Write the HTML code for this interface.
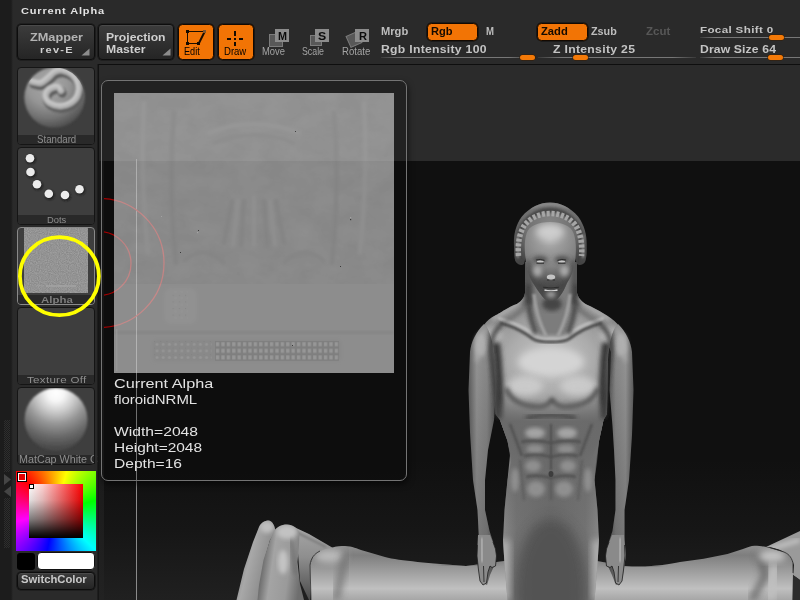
<!DOCTYPE html>
<html>
<head>
<meta charset="utf-8">
<title>Current Alpha</title>
<style>
*{box-sizing:border-box;margin:0;padding:0}
html,body{width:800px;height:600px;overflow:hidden;background:#2a2a2a}
body{position:relative;font-family:"Liberation Sans",sans-serif;font-size:10px;color:#c8c8c8}
.a{position:absolute}
.t{position:absolute;white-space:pre;line-height:1;transform-origin:0 0;font-family:"Liberation Sans",sans-serif}
.btn{position:absolute;border:1px solid #0d0d0d;border-radius:4px;background:linear-gradient(#3c3c3c,#252525);box-shadow:inset 0 1px 0 #4a4a4a,0 0 0 .6px #141414}
.obtn{position:absolute;border:1px solid #140900;border-radius:4.5px;background:#f27405;box-shadow:0 0 0 .6px #0c0c0c}
.sl{position:absolute;height:1px;background:linear-gradient(90deg,#3a3a3a,#777 15%,#777 85%,#3a3a3a)}
.kn{position:absolute;width:15px;height:5px;border-radius:2.5px;background:#f47a08;box-shadow:0 0 0 .5px #3a1c00}
.tile{position:absolute;left:17px;width:78px;height:78px;border:1px solid #151515;border-radius:4px;background:#3e3e3e;overflow:hidden}
.tile .cap{position:absolute;left:0;right:0;bottom:0;height:9px;background:#292929}
svg{position:absolute;overflow:hidden}
</style>
</head>
<body>
<!-- left strip -->
<div class="a" style="left:0;top:0;width:13px;height:600px;background:linear-gradient(90deg,#1c1c1c 0,#1c1c1c 11px,#2a2a2a 13px)"></div>
<div class="a" style="left:4px;top:420px;width:6px;height:52px;background:repeating-conic-gradient(#2e2e2e 0 25%,#1c1c1c 0 50%) 0 0/2px 2px"></div>
<div class="a" style="left:4px;top:498px;width:6px;height:50px;background:repeating-conic-gradient(#2e2e2e 0 25%,#1c1c1c 0 50%) 0 0/2px 2px"></div>
<svg style="left:3px;top:473px" width="9" height="25" viewBox="0 0 9 25"><path d="M1 1 L8 6.5 L1 12Z" fill="#454545"/><path d="M8 13 L1 18.5 L8 24Z" fill="#454545"/></svg>

<!-- top buttons -->
<div class="btn" style="left:17px;top:24px;width:78px;height:36px"></div>
<div class="btn" style="left:98px;top:24px;width:76px;height:36px"></div>
<svg style="left:81px;top:48px" width="9" height="8"><path d="M8.5 .5V7.5H.5Z" fill="#8c8c8c"/></svg>
<svg style="left:162px;top:48px" width="9" height="8"><path d="M8.5 .5V7.5H.5Z" fill="#8c8c8c"/></svg>
<div class="obtn" style="left:178px;top:24px;width:36px;height:36px"></div>
<div class="obtn" style="left:218px;top:24px;width:36px;height:36px"></div>
<div class="obtn" style="left:427px;top:23px;width:51px;height:18px"></div>
<div class="obtn" style="left:537px;top:23px;width:51px;height:18px"></div>

<!-- sliders -->
<div class="sl" style="left:381px;top:57px;width:150px"></div>
<div class="sl" style="left:538px;top:57px;width:158px"></div>
<div class="sl" style="left:700px;top:37px;width:100px;background:linear-gradient(90deg,#3a3a3a,#777 15%,#777)"></div>
<div class="sl" style="left:700px;top:57px;width:100px;background:linear-gradient(90deg,#3a3a3a,#777 15%,#777)"></div>
<div class="kn" style="left:520px;top:55px"></div>
<div class="kn" style="left:573px;top:55px"></div>
<div class="kn" style="left:769px;top:35px"></div>
<div class="kn" style="left:768px;top:55px"></div>

<!-- divider + canvas -->
<div class="a" style="left:97px;top:64px;width:2px;height:536px;background:linear-gradient(90deg,#222,#121212)"></div>
<div class="a" style="left:98px;top:64px;width:702px;height:97px;background:#2b2b2b;border-top:1px solid #0e0e0e;border-left:1px solid #121212"></div>
<div class="a" style="left:99px;top:161px;width:5px;height:439px;background:linear-gradient(180deg,#1b1b1b 0,#1b1b1b 68%,#222 100%)"></div>
<div class="a" id="cv" style="left:104px;top:161px;width:696px;height:439px;background:linear-gradient(180deg,#101010 0,#101010 68%,#161616 84%,#202020 100%)"></div>
<div class="a" style="left:136px;top:159px;width:1px;height:441px;background:#8a8a8a"></div>
<!-- edit icon -->
<svg style="left:178px;top:24px" width="36" height="36" viewBox="178 24 36 36" shape-rendering="crispEdges">
<path d="M187.5 31.5H204M187.5 31.5V43.5M187.5 43.5H198.5" stroke="#1a0d00" stroke-width="1" fill="none"/>
<path d="M199 43 L204.5 32" stroke="#1a0d00" stroke-width="2" fill="none" shape-rendering="auto"/>
<rect x="186" y="30" width="3" height="3" fill="#140a00"/><rect x="186" y="42" width="3" height="3" fill="#140a00"/><rect x="197" y="42" width="3" height="3" fill="#140a00"/><rect x="203" y="30" width="3" height="3" fill="#7d5430"/>
</svg>
<!-- draw icon -->
<svg style="left:218px;top:24px" width="36" height="36" viewBox="218 24 36 36" shape-rendering="crispEdges">
<g fill="#140a00"><rect x="234" y="31" width="2" height="5"/><rect x="234" y="38" width="2" height="2"/><rect x="234" y="42" width="2" height="4"/><rect x="227" y="38" width="4" height="2"/><rect x="239" y="38" width="4" height="2"/></g>
</svg>
<!-- move / scale / rotate -->
<svg style="left:260px;top:24px" width="115" height="26" viewBox="260 24 115 26">
<rect x="269.5" y="34.5" width="13" height="12" fill="#585858" stroke="#7c7c7c"/>
<rect x="275" y="29" width="14" height="13" fill="#8c8c8c"/>
<rect x="310.5" y="35.5" width="11" height="10" fill="#585858" stroke="#7c7c7c"/>
<rect x="315" y="29" width="14" height="13" fill="#8c8c8c"/>
<rect x="348" y="33.5" width="12" height="12" fill="#585858" stroke="#7c7c7c" transform="rotate(-24 354 39.5)"/>
<rect x="355" y="29" width="14" height="13" fill="#8c8c8c"/>
</svg>
<!-- tiles -->
<div class="tile" style="top:67px"><div class="cap"></div></div>
<div class="tile" style="top:147px"><div class="cap"></div></div>
<div class="tile" style="top:227px;border-color:#8a8a8a"><div class="cap"></div></div>
<div class="tile" style="top:307px"><div class="cap"></div></div>
<div class="tile" style="top:387px"><div class="cap"></div></div>
<svg style="left:18px;top:68px" width="76" height="67" viewBox="18 68 76 67">
<defs>
<radialGradient id="sg" cx="48" cy="84" r="46" gradientUnits="userSpaceOnUse"><stop offset="0" stop-color="#a8a8a8"/><stop offset=".45" stop-color="#969696"/><stop offset=".75" stop-color="#727272"/><stop offset="1" stop-color="#4a4a4a"/></radialGradient>
<filter id="b1" x="-20%" y="-20%" width="140%" height="140%"><feGaussianBlur stdDeviation="1.1"/></filter>
<filter id="b05"><feGaussianBlur stdDeviation=".5"/></filter>
<clipPath id="sc"><circle cx="54.6" cy="97.5" r="30"/></clipPath>
</defs>
<circle cx="54.6" cy="97.5" r="30.3" fill="url(#sg)" filter="url(#b1)"/>
<g clip-path="url(#sc)" filter="url(#b1)" fill="none" stroke-linecap="round">
<path d="M32.2 81.5 C33.6 81.7 38.0 83.5 40.6 82.9 C43.2 82.3 45.3 79.9 47.6 78.0 C49.9 76.1 52.0 73.0 54.6 71.7 C57.2 70.4 60.0 69.7 63.0 70.3 C66.0 70.9 70.2 72.8 72.8 75.2 C75.4 77.7 77.7 81.5 78.4 85.0 C79.1 88.5 78.4 93.2 77.0 96.2 C75.6 99.2 72.8 101.6 70.0 103.2 C67.2 104.8 63.5 106.0 60.2 106.0 C56.9 106.0 52.9 104.7 50.4 103.2 C47.9 101.7 46.0 99.0 45.5 96.9 C45.0 94.8 46.3 92.2 47.6 90.6 C48.9 89.0 51.3 87.7 53.2 87.1 C55.1 86.5 57.5 86.5 58.8 87.1 C60.1 87.7 60.6 90.0 61.0 90.6" stroke="#5e5e5e" stroke-width="8.5" transform="translate(1.4 2.8)"/>
<path d="M32.2 81.5 C33.6 81.7 38.0 83.5 40.6 82.9 C43.2 82.3 45.3 79.9 47.6 78.0 C49.9 76.1 52.0 73.0 54.6 71.7 C57.2 70.4 60.0 69.7 63.0 70.3 C66.0 70.9 70.2 72.8 72.8 75.2 C75.4 77.7 77.7 81.5 78.4 85.0 C79.1 88.5 78.4 93.2 77.0 96.2 C75.6 99.2 72.8 101.6 70.0 103.2 C67.2 104.8 63.5 106.0 60.2 106.0 C56.9 106.0 52.9 104.7 50.4 103.2 C47.9 101.7 46.0 99.0 45.5 96.9 C45.0 94.8 46.3 92.2 47.6 90.6 C48.9 89.0 51.3 87.7 53.2 87.1 C55.1 86.5 57.5 86.5 58.8 87.1 C60.1 87.7 60.6 90.0 61.0 90.6" stroke="#b4b4b4" stroke-width="6.5"/>
<path d="M32.2 81.5 C33.6 81.7 38.0 83.5 40.6 82.9 C43.2 82.3 45.3 79.9 47.6 78.0 C49.9 76.1 52.0 73.0 54.6 71.7 C57.2 70.4 60.0 69.7 63.0 70.3 C66.0 70.9 70.2 72.8 72.8 75.2 C75.4 77.7 77.7 81.5 78.4 85.0 C79.1 88.5 78.4 93.2 77.0 96.2 C75.6 99.2 72.8 101.6 70.0 103.2 C67.2 104.8 63.5 106.0 60.2 106.0 C56.9 106.0 52.9 104.7 50.4 103.2 C47.9 101.7 46.0 99.0 45.5 96.9 C45.0 94.8 46.3 92.2 47.6 90.6 C48.9 89.0 51.3 87.7 53.2 87.1 C55.1 86.5 57.5 86.5 58.8 87.1 C60.1 87.7 60.6 90.0 61.0 90.6" stroke="#c8c8c8" stroke-width="2.6" transform="translate(-.8 -1.2)"/>
</g>
</svg>
<svg style="left:18px;top:148px" width="76" height="67" viewBox="18 148 76 67">
<defs><filter id="b2"><feGaussianBlur stdDeviation=".9"/></filter></defs>
<g fill="#1e1e1e" filter="url(#b2)"><circle cx="31" cy="159.5" r="4.6"/><circle cx="31.5" cy="173.2" r="4.6"/><circle cx="38" cy="185.4" r="4.6"/><circle cx="49.8" cy="195" r="4.6"/><circle cx="66" cy="196.2" r="4.6"/><circle cx="80.5" cy="190.4" r="4.6"/></g>
<g fill="#ececec"><circle cx="30" cy="158.3" r="4.3"/><circle cx="30.5" cy="172" r="4.3"/><circle cx="37" cy="184.2" r="4.3"/><circle cx="48.8" cy="193.8" r="4.3"/><circle cx="65" cy="195" r="4.3"/><circle cx="79.5" cy="189.2" r="4.3"/></g>
</svg>
<svg style="left:24px;top:228px" width="64" height="65" viewBox="0 0 64 65">
<defs><filter id="tn" x="0" y="0" width="100%" height="100%"><feTurbulence type="fractalNoise" baseFrequency=".9" numOctaves="1" seed="4"/><feColorMatrix values="0 0 0 0 .62  0 0 0 0 .62  0 0 0 0 .62  .7 0 0 0 -.2"/></filter></defs>
<rect width="64" height="65" fill="#898989"/>
<rect width="64" height="65" filter="url(#tn)"/>
<g stroke="#9c9c9c" stroke-width="1" opacity=".45" fill="none"><path d="M24 12 Q32 8 40 12 M24 34 L29 22 M40 34 L35 22 M32 20 V34"/></g>
<g fill="#a8a8a8" opacity=".6"><rect x="22" y="57" width="30" height="2"/><rect x="12" y="57" width="8" height="1.5" opacity=".6"/></g>
</svg>
<svg style="left:18px;top:388px" width="76" height="67" viewBox="18 388 76 67">
<defs><radialGradient id="mg" cx="56" cy="393" r="64" gradientUnits="userSpaceOnUse"><stop offset="0" stop-color="#fff"/><stop offset=".13" stop-color="#f6f6f6"/><stop offset=".3" stop-color="#cacaca"/><stop offset=".48" stop-color="#969696"/><stop offset=".68" stop-color="#6a6a6a"/><stop offset=".85" stop-color="#4c4c4c"/><stop offset="1" stop-color="#424242"/></radialGradient></defs>
<circle cx="56" cy="419.5" r="31.5" fill="url(#mg)" filter="url(#b1)"/>
</svg>
<!-- colour picker -->
<div class="a" style="left:16px;top:471px;width:80px;height:80px;background:conic-gradient(from 315deg,#f00,#ff0 16.7%,#0f0 33.3%,#0ff 50%,#00f 66%,#f0f 83.3%,#f00)"></div>
<div class="a" style="left:29px;top:484px;width:54px;height:54px;background:linear-gradient(180deg,rgba(0,0,0,0) 0,rgba(0,0,0,.12) 30%,rgba(0,0,0,.5) 65%,rgba(0,0,0,.88) 90%,#000 100%),linear-gradient(90deg,#fff 0,#ffd0d0 25%,#f00 100%)"></div>
<div class="a" style="left:18px;top:473px;width:8px;height:8px;background:#e80000;border:1.2px solid #fff;outline:1px solid #000"></div>
<div class="a" style="left:29px;top:484px;width:5px;height:5px;background:#fff;border:1px solid #000"></div>
<div class="a" style="left:17px;top:553px;width:18px;height:17px;background:#000;border-radius:3px"></div>
<div class="a" style="left:37px;top:552px;width:58px;height:18px;background:#fff;border:1px solid #111;border-radius:4px"></div>
<div class="btn" style="left:17px;top:572px;width:78px;height:18px"></div>
<!-- sculpt figure -->
<svg style="left:104px;top:161px" width="696" height="439" viewBox="104 161 696 439">
<defs>
<filter id="f1" x="-10%" y="-10%" width="120%" height="120%"><feGaussianBlur stdDeviation="1"/></filter>
<filter id="f2" x="-20%" y="-20%" width="140%" height="140%"><feGaussianBlur stdDeviation="2"/></filter>
<filter id="f3" x="-30%" y="-30%" width="160%" height="160%"><feGaussianBlur stdDeviation="3.5"/></filter>
<filter id="f5" x="-40%" y="-40%" width="180%" height="180%"><feGaussianBlur stdDeviation="6"/></filter>
<filter id="f06"><feGaussianBlur stdDeviation=".6"/></filter>
<linearGradient id="gLeg" x1="0" y1="548" x2="0" y2="600" gradientUnits="userSpaceOnUse"><stop offset="0" stop-color="#8c8c8c"/><stop offset=".14" stop-color="#7e7e7e"/><stop offset=".45" stop-color="#9e9e9e"/><stop offset=".78" stop-color="#c0c0c0"/><stop offset="1" stop-color="#a6a6a6"/></linearGradient>
<linearGradient id="gL1" x1="236" y1="560" x2="268" y2="568" gradientUnits="userSpaceOnUse"><stop offset="0" stop-color="#7a7a7a"/><stop offset=".4" stop-color="#a8a8a8"/><stop offset="1" stop-color="#8a8a8a"/></linearGradient>
<linearGradient id="gL2" x1="260" y1="560" x2="302" y2="566" gradientUnits="userSpaceOnUse"><stop offset="0" stop-color="#5e5e5e"/><stop offset=".3" stop-color="#a4a4a4"/><stop offset=".7" stop-color="#9a9a9a"/><stop offset="1" stop-color="#6e6e6e"/></linearGradient>
<linearGradient id="gTorso" x1="503" y1="0" x2="599" y2="0" gradientUnits="userSpaceOnUse"><stop offset="0" stop-color="#868686"/><stop offset=".14" stop-color="#727272"/><stop offset=".5" stop-color="#686868"/><stop offset=".86" stop-color="#727272"/><stop offset="1" stop-color="#868686"/></linearGradient>
<linearGradient id="gArmL" x1="468" y1="0" x2="497" y2="0" gradientUnits="userSpaceOnUse"><stop offset="0" stop-color="#5c5c5c"/><stop offset=".3" stop-color="#969696"/><stop offset=".65" stop-color="#8a8a8a"/><stop offset="1" stop-color="#505050"/></linearGradient>
<linearGradient id="gArmR" x1="634" y1="0" x2="606" y2="0" gradientUnits="userSpaceOnUse"><stop offset="0" stop-color="#5c5c5c"/><stop offset=".3" stop-color="#969696"/><stop offset=".65" stop-color="#8a8a8a"/><stop offset="1" stop-color="#505050"/></linearGradient>
<radialGradient id="gChest" cx="551" cy="360" r="92" gradientUnits="userSpaceOnUse" gradientTransform="translate(551 360) scale(1.3 1) translate(-551 -360)"><stop offset="0" stop-color="#cacaca"/><stop offset=".35" stop-color="#acacac"/><stop offset=".7" stop-color="#848484"/><stop offset="1" stop-color="#5e5e5e"/></radialGradient>
<radialGradient id="gHood" cx="550" cy="222" r="46" gradientUnits="userSpaceOnUse"><stop offset="0" stop-color="#848484"/><stop offset=".6" stop-color="#6e6e6e"/><stop offset="1" stop-color="#444"/></radialGradient>
<radialGradient id="gFace" cx="550" cy="238" r="48" gradientUnits="userSpaceOnUse"><stop offset="0" stop-color="#b8b8b8"/><stop offset=".25" stop-color="#9c9c9c"/><stop offset=".6" stop-color="#828282"/><stop offset="1" stop-color="#484848"/></radialGradient>
<linearGradient id="gNeck" x1="520" y1="0" x2="582" y2="0" gradientUnits="userSpaceOnUse"><stop offset="0" stop-color="#5a5a5a"/><stop offset=".25" stop-color="#8a8a8a"/><stop offset=".5" stop-color="#6e6e6e"/><stop offset=".75" stop-color="#8a8a8a"/><stop offset="1" stop-color="#5a5a5a"/></linearGradient>

<clipPath id="cTorso"><path d="M497 380 L500 420 L507.5 441 L511 462 L507.5 480 L504.5 510 L503 540 L504.5 564 L507.5 600 L594.5 600 L597.5 564 L599 540 L597.5 510 L594.5 480 L597 462 L599 441 L603.5 420 L606 380Z"/></clipPath>
<clipPath id="cChest"><path d="M525 262 L525 293 C524 300 518 304 514 305 C505 309 500 313 496 315 C490 318 487 321 484.7 324 C490 330 494 345 494.5 360 L495.5 414 L500 420 L507.5 441 L512 462 L590 462 L599 441 L603.5 420 L607 414 L608 360 C608.5 345 612 330 617.5 324 C614 320 608 316 604 313.7 C598 310 592 307 587 304.7 C582 302 578 298 577 293 L577 262Z"/></clipPath>
<clipPath id="cFace"><path d="M550 222 C538 222 529 226 526.7 233 C524.5 240 524.5 247 525 253 C525.5 260 526 265 527.5 270 C529 276 531 280 533 283 C536 288 539 292 542 296 C545 300 548 301 551 301 C554 301 557 300 560 296 C563 292 565 288 567 283 C570 278 572 274 573 270 C575 265 575.5 260 575.8 253 C576 247 576 240 573.5 233 C571 226 562 222 550 222Z"/></clipPath>
<clipPath id="cHood"><path d="M550 202.5 C540 202.5 530 207 521.7 216.7 C515 226 513.5 236 514 246 C514 254 514.5 260 516 262 C518 265 522 266 524 264 L527 252 L573 252 L577 264 C579 266 583 265 585 262 C586.5 258 587 252 586.7 246 C587 236 585 226 578.3 216.7 C570 207 560 202.5 550 202.5Z"/></clipPath>

<clipPath id="cL1"><path d="M269 520.5 C264 520.5 261 523 259 527 L253 542 L244 569 L236.5 600 L262 600 L264 561 L270 540 L275.5 531.5 C275 526 272.5 521 269 520.5Z"/></clipPath>
<clipPath id="cL2"><path d="M287 524.5 C281 524.5 277 527 274 531 L270 540 L263.5 560 L259 585 L257.5 600 L304 600 L300 584 L297.5 562 L299 545 L299.5 534 C297.5 528 293 524.5 287 524.5Z"/></clipPath>
<clipPath id="cL3"><path d="M313 557 C315 553 322 549 331 548 C337 546 341 546 345 546 C352 546 358 549 361 550 L385 557 C400 561 430 563 466 566 L520 559 L520 600 L311 600 L310 585 L310 565Z"/></clipPath>
<clipPath id="cR3"><path d="M585 559 L597 561 L625 566 C650 568 668 564 680 562 L703.7 558.8 L727.5 554 L743 549 C748 547 751 546 754.4 545.8 C760 545.8 764 546.5 768.6 547.7 L783 551.7 C788 553.5 791 556 793 562.8 L793 573 L792.4 600 L585 600Z"/></clipPath>
<clipPath id="cR2"><path d="M766 547 L800 531 L800 580 L793 575 L794 565 C790 553 778 547 766 547Z"/></clipPath>

<clipPath id="cAbs"><path d="M495.5 398 L495.5 414 L500 420 L507.5 441 L511 462 L507.5 480 L504.5 510 L503.6 528 L598.4 528 L597.5 510 L594.5 480 L597 462 L599 441 L603.5 420 L607 414 L607 398Z"/></clipPath>
<linearGradient id="gAbs" x1="0" y1="398" x2="0" y2="528" gradientUnits="userSpaceOnUse"><stop offset="0" stop-color="#6c6c6c" stop-opacity="0"/><stop offset=".18" stop-color="#686868" stop-opacity=".9"/><stop offset=".6" stop-color="#6c6c6c" stop-opacity=".7"/><stop offset="1" stop-color="#6c6c6c" stop-opacity="0"/></linearGradient>

<linearGradient id="gFade" x1="0" y1="425" x2="0" y2="462" gradientUnits="userSpaceOnUse"><stop offset="0" stop-color="#fff"/><stop offset="1" stop-color="#000"/></linearGradient>
<mask id="mChest" maskUnits="userSpaceOnUse" x="460" y="255" width="190" height="215"><rect x="460" y="255" width="190" height="215" fill="url(#gFade)"/></mask>

<linearGradient id="gArmV" x1="0" y1="330" x2="0" y2="560" gradientUnits="userSpaceOnUse"><stop offset="0" stop-color="#000" stop-opacity="0"/><stop offset=".5" stop-color="#000" stop-opacity=".12"/><stop offset="1" stop-color="#000" stop-opacity=".22"/></linearGradient>
<linearGradient id="gL2b" x1="0" y1="530" x2="0" y2="598" gradientUnits="userSpaceOnUse"><stop offset="0" stop-color="#a4a4a4"/><stop offset=".4" stop-color="#8e8e8e"/><stop offset="1" stop-color="#4e4e4e"/></linearGradient>
</defs>

<!-- legs -->
<path d="M269 520.5 C264 520.5 261 523 259 527 L253 542 L244 569 L236.5 600 L262 600 L264 561 L270 540 L275.5 531.5 C275 526 272.5 521 269 520.5Z" fill="url(#gL1)"/>
<ellipse cx="267" cy="527" rx="7" ry="6" fill="#c0c0c0" filter="url(#f2)" clip-path="url(#cL1)"/>
<path d="M294 527 L309 534 L321 541 L333 548 L313 557 L310 566 L310 600 L309 600 L300 581 L298 553 L294 535Z" fill="url(#gL2b)"/>
<path d="M296 532 L326 547" stroke="#7e7e7e" stroke-width="2.5" filter="url(#f1)"/>
<path d="M287 524.5 C281 524.5 277 527 274 531 L270 540 L263.5 560 L259 585 L257.5 600 L304 600 L300 584 L297.5 562 L299 545 L299.5 534 C297.5 528 293 524.5 287 524.5Z" fill="url(#gL2)"/>
<g clip-path="url(#cL2)"><ellipse cx="287" cy="532" rx="10" ry="7" fill="#c2c2c2" filter="url(#f2)"/><ellipse cx="283" cy="562" rx="5" ry="12" fill="#c4c4c4" filter="url(#f2)"/><path d="M291 540 L296 575" stroke="#707070" stroke-width="4" filter="url(#f2)"/></g>
<path id="pL3" d="M313 557 C315 553 322 549 331 548 C337 546 341 546 345 546 C352 546 358 549 361 550 L385 557 C400 561 430 563 466 566 L520 559 L520 600 L311 600 L310 585 L310 565Z" fill="url(#gLeg)"/>
<g clip-path="url(#cL3)"><ellipse cx="330" cy="556" rx="16" ry="7" fill="#bababa" filter="url(#f3)"/><path d="M346 552 L336 600" stroke="#6e6e6e" stroke-width="7" filter="url(#f3)" opacity=".8"/><path d="M311 560 V600" stroke="#585858" stroke-width="3" filter="url(#f1)"/><path d="M440 562 Q480 566 503 556" stroke="#6a6a6a" stroke-width="5" filter="url(#f3)" fill="none"/></g>
<path d="M311 600 L310 565 C311 558 314 554 320 551" fill="none" stroke="#2a2a2a" stroke-width=".8"/>
<path d="M766 547 L800 531 L800 580 L793 575 L794 565 C790 553 778 547 766 547Z" fill="#9a9a9a"/>
<path d="M770 549 L800 540" stroke="#bdbdbd" stroke-width="5" filter="url(#f2)" clip-path="url(#cR2)"/>
<path d="M793 575 L800 580 L800 600 L792 600Z" fill="#2c2c2c"/>
<path id="pR3" d="M585 559 L597 561 L625 566 C650 568 668 564 680 562 L703.7 558.8 L727.5 554 L743 549 C748 547 751 546 754.4 545.8 C760 545.8 764 546.5 768.6 547.7 L783 551.7 C788 553.5 791 556 793 562.8 L793 573 L792.4 600 L585 600Z" fill="url(#gLeg)"/>
<g clip-path="url(#cR3)"><path d="M758 555 C762 562 764 568 765 576 L752 600" stroke="#5a5a5a" stroke-width="6" filter="url(#f3)" fill="none" opacity=".85"/><ellipse cx="772" cy="556" rx="14" ry="6" fill="#c6c6c6" filter="url(#f3)"/><path d="M775 565 L770 600" stroke="#c0c0c0" stroke-width="10" filter="url(#f3)"/><path d="M792 560 V600" stroke="#5a5a5a" stroke-width="3" filter="url(#f1)"/><path d="M599 556 Q620 566 660 564" stroke="#6a6a6a" stroke-width="5" filter="url(#f3)" fill="none"/></g>
<path d="M770 547.5 L783 551.7 C788 553.5 791 556 793 562.8 L793 573" fill="none" stroke="#2a2a2a" stroke-width=".8"/>

<!-- torso column -->
<path id="pTorso" d="M500 420 L507.5 441 L512 462 L510.5 450 L507.5 480 L504.5 510 L503 540 L504.5 564 L507.5 600 L594.5 600 L597.5 564 L599 540 L597.5 510 L594.5 480 L596 462 L599 441 L603.5 420 L606 380 L497 380Z" fill="url(#gTorso)"/>


<g clip-path="url(#cTorso)">
<ellipse cx="551" cy="592" rx="36" ry="74" fill="#525252" filter="url(#f5)" opacity=".95"/>
<rect x="498" y="540" width="12" height="60" fill="#b8b8b8" filter="url(#f3)" opacity=".8"/>
<rect x="592" y="540" width="12" height="60" fill="#b8b8b8" filter="url(#f3)" opacity=".8"/>
</g>

<!-- arms -->
<path id="pArmL" d="M484 324 C476 332 471 342 470 352 L468.5 390 L470 432 L473 480 L477.5 510 L479 540 L477.5 556 L480 575 L483 583 L487 585 L490 575 L494 566 L495.5 549 L489.5 531 L485 510 L485 480 L488 450 L494 420 L496 390 L494 352 L500 330Z" fill="url(#gArmL)"/>
<path id="pArmR" d="M618 324 C626 332 631 342 632 352 L633.5 390 L632 435 L629 480 L624.5 510 L624.5 540 L626 555 L623 575 L620 583 L616 585 L612 575 L608 566 L606.5 549 L612.5 531 L615.5 510 L615.5 480 L614 450 L612.5 426 L609.5 390 L611 352 L602 330Z" fill="url(#gArmR)"/>

<path d="M484 324 C476 332 471 342 470 352 L468.5 390 L470 432 L473 480 L477.5 510 L479 540 L477.5 556 L480 575 L483 583 L487 585 L490 575 L494 566 L495.5 549 L489.5 531 L485 510 L485 480 L488 450 L494 420 L496 390 L494 352 L500 330Z" fill="url(#gArmV)"/>
<path d="M618 324 C626 332 631 342 632 352 L633.5 390 L632 435 L629 480 L624.5 510 L624.5 540 L626 555 L623 575 L620 583 L616 585 L612 575 L608 566 L606.5 549 L612.5 531 L615.5 510 L615.5 480 L614 450 L612.5 426 L609.5 390 L611 352 L602 330Z" fill="url(#gArmV)"/>
<g filter="url(#f2)" fill="#b6b6b6" opacity=".8"><ellipse cx="481" cy="345" rx="6" ry="12"/><ellipse cx="621" cy="345" rx="6" ry="12"/></g>
<!-- hands -->
<g id="handL"><path d="M478 535 L477 556 L478.5 570 L480 581 L483 585 L486.5 583 L488 572 L490 566 L492 567.5 L495.5 566 L496.5 556 L495.5 549 L490 535Z" fill="#8a8a8a"/><path d="M477.4 545 L477 556 L478.5 570 L480 581 L483 585 L486.5 583 L488 572 L490 566 L492 567.5 L495.5 566 L496.5 556 L495.5 549 L493 542" fill="none" stroke="#1e1e1e" stroke-width=".8" stroke-linejoin="round"/><path d="M483.5 566 L484 582" stroke="#2a2a2a" stroke-width=".9"/><path d="M481.5 538 L482 562" stroke="#b0b0b0" stroke-width="3" filter="url(#f1)"/></g>
<use href="#handL" transform="translate(1102 0) scale(-1 1)"/>

<!-- shoulders / chest -->
<path id="pChest" mask="url(#mChest)" d="M525 262 L525 293 C524 300 518 304 514 305 C505 309 500 313 496 315 C490 318 487 321 484.7 324 C490 330 494 345 494.5 360 L495.5 414 L500 420 L507.5 441 L512 462 L590 462 L599 441 L603.5 420 L607 414 L608 360 C608.5 345 612 330 617.5 324 C614 320 608 316 604 313.7 C598 310 592 307 587 304.7 C582 302 578 298 577 293 L577 262Z" fill="url(#gChest)"/>


<g clip-path="url(#cChest)">
<g fill="#d4d4d4" filter="url(#f3)"><ellipse cx="551" cy="362" rx="33" ry="14"/><ellipse cx="492" cy="335" rx="10" ry="8" opacity=".6"/><ellipse cx="610" cy="335" rx="10" ry="8" opacity=".6"/></g>
<g fill="#cccccc" filter="url(#f3)" opacity=".95"><ellipse cx="525" cy="386" rx="18" ry="10"/><ellipse cx="578" cy="386" rx="18" ry="10"/></g>
<g stroke="#4a4a4a" stroke-width="4" fill="none" filter="url(#f2)"><path d="M506 388 C510 400 522 407 540 407 C547 406 551 402 552 398 C553 402 557 406 564 407 C582 407 594 400 598 388"/></g>
<g stroke="#505050" stroke-width="3" fill="none" filter="url(#f1)"><path d="M500 323 C512 326 524 332 533 339 C540 343 562 343 569 339 C578 332 590 326 602 323"/></g>
<g stroke="#c4c4c4" stroke-width="2.5" fill="none" filter="url(#f1)" opacity=".9"><path d="M498 318 C510 321 526 328 535 335 C542 339 560 339 567 335 C576 328 592 321 604 318"/></g>
<g stroke="#3a3a3a" stroke-width="8" fill="none" filter="url(#f2)"><path d="M496 343 C499 365 500 390 499 420"/><path d="M606 343 C603 365 602 390 604 420"/></g>
</g>

<!-- abs -->
<g clip-path="url(#cAbs)">
<rect x="490" y="398" width="122" height="130" fill="url(#gAbs)"/>
<g fill="#ababab" filter="url(#f2)" opacity=".9"><ellipse cx="535" cy="433" rx="10" ry="5.5"/><ellipse cx="567" cy="433" rx="10" ry="5.5"/></g>
<g fill="#969696" filter="url(#f2)" opacity=".85"><ellipse cx="535" cy="449" rx="9" ry="4.5"/><ellipse cx="566" cy="449" rx="9" ry="4.5"/><ellipse cx="533" cy="466" rx="8" ry="6"/><ellipse cx="568" cy="466" rx="8" ry="6"/><ellipse cx="536" cy="489" rx="9" ry="8"/><ellipse cx="564" cy="489" rx="9" ry="8"/><ellipse cx="515" cy="480" rx="4" ry="12"/><ellipse cx="588" cy="480" rx="4" ry="12"/></g>
<g stroke="#4e4e4e" stroke-width="2.4" fill="none" filter="url(#f1)" opacity=".85"><path d="M551 424 V470"/><path d="M551 478 V500" opacity=".6"/><path d="M521 442 Q536 439 551 443 Q566 439 581 442"/><path d="M524 456 Q537 453 551 457 Q565 453 578 456"/><path d="M526 477 Q538 474 551 478 Q564 474 576 477"/><path d="M510 424 L522 456 M592 424 L580 456"/><path d="M520 460 L524 500 M582 460 L578 500" opacity=".5"/></g>
<path d="M526 418 Q551 412 576 418" stroke="#444" stroke-width="4" fill="none" filter="url(#f2)"/>
<ellipse cx="551" cy="474" rx="2.5" ry="3" fill="#3c3c3c" filter="url(#f06)"/>
</g>

<!-- deltoid grooves -->
<g stroke="#383838" stroke-width="4" fill="none" filter="url(#f2)" opacity=".95"><path d="M502 324 C495 330 490 340 491 352 C493 370 497 395 498 418"/><path d="M600 324 C607 330 612 340 611 352 C609 370 605 395 604 418"/></g>
<g stroke="#b4b4b4" stroke-width="3" fill="none" filter="url(#f2)" opacity=".8"><path d="M486 328 C480 336 477 348 477 362"/><path d="M616 328 C622 336 625 348 625 362"/></g>
<!-- neck -->
<g clip-path="url(#cChest)">
<rect x="520" y="258" width="62" height="46" fill="#585858" filter="url(#f2)"/>
<path d="M533 262 C533 300 534 318 539 336 L565 336 C570 318 571 300 571 262Z" fill="#7c7c7c" filter="url(#f2)"/>
<g stroke="#3e3e3e" stroke-width="5" fill="none" filter="url(#f2)" opacity=".95"><path d="M528 284 C527 300 530 318 536 334"/><path d="M576 284 C577 300 574 318 568 334"/></g>
<g stroke="#a4a4a4" stroke-width="3.5" fill="none" filter="url(#f1)" opacity=".9"><path d="M534 294 C535 308 540 324 546 336"/><path d="M570 294 C569 308 564 324 558 336"/></g>
<ellipse cx="552" cy="304" rx="10" ry="7" fill="#404040" filter="url(#f2)" opacity=".9"/>
<g stroke="#b8b8b8" stroke-width="4" fill="none" filter="url(#f2)" opacity=".9"><path d="M523 297 C518 305 506 311 492 319"/><path d="M579 297 C584 305 596 311 610 319"/></g>
<g stroke="#5a5a5a" stroke-width="3" fill="none" filter="url(#f2)" opacity=".8"><path d="M527 304 C522 312 512 318 504 322"/><path d="M575 304 C580 312 590 318 598 322"/></g>
</g>
<!-- hood -->
<path id="pHood" d="M550 202.5 C540 202.5 530 207 521.7 216.7 C515 226 513.5 236 514 246 C514 254 514.5 260 516 262 C518 265 522 266 524 264 L527 252 L573 252 L577 264 C579 266 583 265 585 262 C586.5 258 587 252 586.7 246 C587 236 585 226 578.3 216.7 C570 207 560 202.5 550 202.5Z" fill="url(#gHood)"/>

<!-- face -->
<path id="pFace" d="M550 222 C538 222 529 226 526.7 233 C524.5 240 524.5 247 525 253 C525.5 260 526 265 527.5 270 C529 276 531 280 533 283 C536 288 539 292 542 296 C545 300 548 301 551 301 C554 301 557 300 560 296 C563 292 565 288 567 283 C570 278 572 274 573 270 C575 265 575.5 260 575.8 253 C576 247 576 240 573.5 233 C571 226 562 222 550 222Z" fill="url(#gFace)"/>

<g clip-path="url(#cHood)">
<path d="M517 262 C516 245 518 230 525 222 C533 213 541 210 550 210 C559 210 567 213 575 222 C582 230 584 245 583 262" fill="none" stroke="#4a4a4a" stroke-width="5" filter="url(#f1)"/>
<g stroke="#9a9a9a" stroke-width="2" fill="none" filter="url(#f1)" opacity=".8"><path d="M518 235 V258"/><path d="M583 235 V258"/><path d="M530 208 Q550 200 570 208"/></g>
<path d="M518.5 256 C517.5 244 519.5 232 525 224.5 C532 216.5 541 213.5 550 213.5 C559 213.5 568 216.5 575 224.5 C580.5 232 582.5 244 581.5 256" fill="none" stroke="#a6a6a6" stroke-width="5.5" stroke-dasharray="3 1.8" filter="url(#f06)"/>
</g>
<g clip-path="url(#cFace)">
<ellipse cx="550" cy="232" rx="14" ry="8" fill="#cecece" filter="url(#f3)"/>
<g fill="#4e4e4e" filter="url(#f2)" opacity=".9"><ellipse cx="540" cy="259.5" rx="7.5" ry="3.5"/><ellipse cx="562" cy="259.5" rx="7.5" ry="3.5"/><ellipse cx="551" cy="283.5" rx="9" ry="2.6"/><ellipse cx="551" cy="301" rx="10" ry="4"/></g>
<g stroke="#4c4c4c" stroke-width="3.5" fill="none" filter="url(#f2)" opacity=".85"><path d="M528 260 C529 275 535 288 543 298"/><path d="M574 260 C573 275 567 288 559 298"/></g>
<g fill="#b0b0b0" filter="url(#f2)" opacity=".9"><ellipse cx="537.5" cy="271" rx="4.5" ry="5.5"/><ellipse cx="564.5" cy="271" rx="4.5" ry="5.5"/><ellipse cx="551" cy="294.5" rx="5" ry="3"/></g>
<path d="M551 250 L551 275" stroke="#bebebe" stroke-width="3" filter="url(#f1)"/>
<ellipse cx="551" cy="277" rx="4.2" ry="2.6" fill="#c4c4c4" filter="url(#f06)"/>
<g fill="#c8c8c8" filter="url(#f06)"><ellipse cx="540.3" cy="261.6" rx="3.4" ry="1.2"/><ellipse cx="561.7" cy="261.6" rx="3.4" ry="1.2"/></g>
<path d="M544.5 290 Q551 291.8 557.5 290" stroke="#d4d4d4" stroke-width="1.3" fill="none" filter="url(#f06)"/>
<g stroke="#2c2c2c" stroke-width="1" fill="none" filter="url(#f06)"><path d="M536 260 Q540 258.6 544.5 260.4"/><path d="M557.5 260.4 Q562 258.6 566 260"/><path d="M536.5 263.2 H544"/><path d="M558 263.2 H565.5"/><path d="M543 287.2 Q551 288.8 559 287.2"/><path d="M547 280 H549.5 M552.5 280 H555"/></g>
</g>
</svg>
<!-- brush cursor (red circles) -->
<svg style="left:104px;top:161px" width="120" height="200" viewBox="104 161 120 200"><circle cx="99.5" cy="263" r="64.5" fill="none" stroke="#c80000" stroke-width="1.3"/><circle cx="99" cy="263.5" r="32" fill="none" stroke="#c80000" stroke-width="1.3"/></svg>
<!-- popup -->
<div class="a" style="left:101px;top:80px;width:306px;height:401px;border:1px solid #747474;border-radius:7px;background:rgba(0,0,0,.19);box-shadow:1px 3px 6px rgba(0,0,0,.55)"></div>
<svg style="left:114px;top:93px;opacity:.62" width="280" height="280" viewBox="0 0 280 280">
<defs>
<filter id="an" x="0" y="0" width="100%" height="100%"><feTurbulence type="fractalNoise" baseFrequency=".035 .05" numOctaves="3" seed="7"/><feColorMatrix values="0 0 0 0 .5  0 0 0 0 .5  0 0 0 0 .5  .34 0 0 0 -.1"/></filter>
<filter id="an2" x="0" y="0" width="100%" height="100%"><feTurbulence type="fractalNoise" baseFrequency=".04 .06" numOctaves="3" seed="23"/><feColorMatrix values="0 0 0 0 1  0 0 0 0 1  0 0 0 0 1  .3 0 0 0 -.1"/></filter>
<filter id="ab"><feGaussianBlur stdDeviation="1.6"/></filter>
<pattern id="chk" width="5.4" height="6.6" patternUnits="userSpaceOnUse" x="101" y="248"><rect width="5.4" height="6.6" fill="#c6c6c6"/><rect x="1" y="1.2" width="3.2" height="4" fill="#ececec"/></pattern>
<pattern id="chk2" width="6.2" height="6.6" patternUnits="userSpaceOnUse" x="40" y="248"><circle cx="3" cy="3.3" r="1.5" fill="#e8e8e8"/><circle cx="0" cy="0" r="1.2" fill="#cacaca"/></pattern>
</defs>
<rect width="280" height="280" fill="#d6d6d6"/>
<rect y="191" width="280" height="89" fill="#dcdcdc"/>
<rect width="280" height="191" filter="url(#an)"/>
<rect width="280" height="191" filter="url(#an2)"/>
<g filter="url(#ab)" fill="none" stroke-linecap="round">
<g stroke="#cdcdcd" stroke-width="4"><path d="M118 108 L110 150"/><path d="M130 108 L127 152"/><path d="M150 108 L153 152"/><path d="M162 108 L170 150"/><path d="M60 20 Q54 90 62 170"/><path d="M220 20 Q226 90 218 170"/></g>
<g stroke="#e0e0e0" stroke-width="4"><path d="M124 108 L119 152"/><path d="M140 104 L140 152"/><path d="M156 108 L161 152"/><path d="M95 40 Q140 22 185 40"/><path d="M30 10 Q26 80 34 160"/><path d="M250 10 Q254 80 246 160"/></g>
<g stroke="#cecece" stroke-width="3"><path d="M70 168 Q90 150 110 170"/><path d="M210 168 Q190 150 170 170"/><path d="M100 50 Q140 34 180 50"/></g>
</g>
<rect x="50" y="195" width="33" height="36" rx="8" fill="#e2e2e2" filter="url(#ab)"/>
<rect x="58" y="198" width="16" height="30" fill="url(#chk2)" opacity=".7"/>
<rect x="0" y="238" width="280" height="3" fill="#cfcfcf" filter="url(#ab)"/>
<rect x="38" y="246" width="190" height="23" rx="6" fill="#d6d6d6" filter="url(#ab)"/>
<rect x="40" y="248" width="58" height="19.8" fill="url(#chk2)"/>
<rect x="101" y="248" width="124" height="19.8" fill="url(#chk)"/>
<rect x="2" y="236" width="1.5" height="42" fill="#f0f0f0" opacity=".7"/>
<g fill="#555"><rect x="84" y="137" width="1" height="1"/><rect x="236" y="126" width="1.2" height="1.2"/><rect x="181" y="38" width="1" height="1"/><rect x="226" y="173" width="1" height="1"/><rect x="66" y="159" width="1" height="1"/><rect x="178" y="252" width="1" height="1"/></g>
<g fill="#fff"><rect x="83" y="139" width="1.2" height="1.2"/><rect x="236" y="124" width="1.2" height="1.2"/><rect x="47" y="123" width="1" height="1"/></g>
</svg>
<span class="t" style="left:21.00px;top:7.13px;font-size:9px;font-weight:bold;color:#e4e4e4;letter-spacing:0.7px;transform:scaleX(1.22)">Current Alpha</span>
<span class="t" style="left:29.50px;top:31.52px;font-size:11.5px;font-weight:bold;color:#b4b4b4;letter-spacing:0px;transform:scaleX(1.106)">ZMapper</span>
<span class="t" style="left:40.00px;top:46.13px;font-size:9px;font-weight:bold;color:#cfcfcf;letter-spacing:1.03px;transform:scaleX(1.22)">rev-E</span>
<span class="t" style="left:105.50px;top:32.36px;font-size:10.5px;font-weight:bold;color:#cfcfcf;letter-spacing:0px;transform:scaleX(1.159)">Projection</span>
<span class="t" style="left:105.50px;top:44.53px;font-size:10px;font-weight:bold;color:#cfcfcf;letter-spacing:0.03px;transform:scaleX(1.22)">Master</span>
<span class="t" style="left:183.75px;top:46.11px;font-size:10.5px;font-weight:normal;color:#050200;letter-spacing:0px;transform:scaleX(0.87)">Edit</span>
<span class="t" style="left:223.75px;top:46.11px;font-size:10.5px;font-weight:normal;color:#050200;letter-spacing:0px;transform:scaleX(0.908)">Draw</span>
<span class="t" style="left:262.00px;top:46.11px;font-size:10.5px;font-weight:normal;color:#a4a4a4;letter-spacing:0px;transform:scaleX(0.895)">Move</span>
<span class="t" style="left:301.75px;top:46.11px;font-size:10.5px;font-weight:normal;color:#a4a4a4;letter-spacing:0px;transform:scaleX(0.838)">Scale</span>
<span class="t" style="left:341.75px;top:46.11px;font-size:10.5px;font-weight:normal;color:#a4a4a4;letter-spacing:0px;transform:scaleX(0.913)">Rotate</span>
<span class="t" style="left:278.00px;top:30.71px;font-size:10.5px;font-weight:bold;color:#0c0c0c;letter-spacing:0px;transform:scaleX(1.029)">M</span>
<span class="t" style="left:317.80px;top:30.71px;font-size:10.5px;font-weight:bold;color:#0c0c0c;letter-spacing:0px;transform:scaleX(1.169)">S</span>
<span class="t" style="left:359.20px;top:30.71px;font-size:10.5px;font-weight:bold;color:#0c0c0c;letter-spacing:0px;transform:scaleX(1.053)">R</span>
<span class="t" style="left:380.75px;top:26.54px;font-size:10px;font-weight:bold;color:#bdbdbd;letter-spacing:0px;transform:scaleX(1.114)">Mrgb</span>
<span class="t" style="left:430.50px;top:26.54px;font-size:10px;font-weight:bold;color:#140a00;letter-spacing:0px;transform:scaleX(1.105)">Rgb</span>
<span class="t" style="left:485.75px;top:26.54px;font-size:10px;font-weight:bold;color:#bdbdbd;letter-spacing:0px;transform:scaleX(0.959)">M</span>
<span class="t" style="left:380.75px;top:44.83px;font-size:10px;font-weight:bold;color:#c4c4c4;letter-spacing:0.23px;transform:scaleX(1.22)">Rgb Intensity 100</span>
<span class="t" style="left:540.75px;top:26.54px;font-size:10px;font-weight:bold;color:#140a00;letter-spacing:0px;transform:scaleX(1.12)">Zadd</span>
<span class="t" style="left:590.50px;top:26.54px;font-size:10px;font-weight:bold;color:#bdbdbd;letter-spacing:0px;transform:scaleX(1.078)">Zsub</span>
<span class="t" style="left:645.75px;top:26.54px;font-size:10px;font-weight:bold;color:#575757;letter-spacing:0px;transform:scaleX(1.149)">Zcut</span>
<span class="t" style="left:553.00px;top:44.83px;font-size:10px;font-weight:bold;color:#c4c4c4;letter-spacing:0.25px;transform:scaleX(1.22)">Z Intensity 25</span>
<span class="t" style="left:700.40px;top:24.76px;font-size:9.5px;font-weight:bold;color:#c4c4c4;letter-spacing:0.29px;transform:scaleX(1.22)">Focal Shift 0</span>
<span class="t" style="left:700.40px;top:44.94px;font-size:10px;font-weight:bold;color:#c4c4c4;letter-spacing:0.1px;transform:scaleX(1.22)">Draw Size 64</span>
<span class="t" style="left:37.00px;top:134.53px;font-size:10px;font-weight:normal;color:#8e8e8e;letter-spacing:0px;transform:scaleX(0.967)">Standard</span>
<span class="t" style="left:47.00px;top:214.96px;font-size:9.5px;font-weight:normal;color:#8e8e8e;letter-spacing:0px;transform:scaleX(0.985)">Dots</span>
<span class="t" style="left:40.75px;top:294.96px;font-size:9.5px;font-weight:bold;color:#7e7e7e;letter-spacing:0px;transform:scaleX(1.203)">Alpha</span>
<span class="t" style="left:27.00px;top:374.96px;font-size:9.5px;font-weight:normal;color:#8e8e8e;letter-spacing:0.23px;transform:scaleX(1.22)">Texture Off</span>
<span class="t" style="left:18.75px;top:454.54px;font-size:10px;font-weight:normal;color:#8e8e8e;letter-spacing:0px;transform:scaleX(1.073)">MatCap White C</span>
<span class="t" style="left:20.50px;top:575.28px;font-size:10px;font-weight:bold;color:#c8c8c8;letter-spacing:0px;transform:scaleX(1.127)">SwitchColor</span>
<span class="t" style="left:114.00px;top:376.67px;font-size:13.5px;font-weight:normal;color:#e2e2e2;letter-spacing:0px;transform:scaleX(1.202)">Current Alpha</span>
<span class="t" style="left:114.00px;top:392.67px;font-size:13.5px;font-weight:normal;color:#e2e2e2;letter-spacing:0px;transform:scaleX(1.109)">floroidNRML</span>
<span class="t" style="left:114.00px;top:424.67px;font-size:13.5px;font-weight:normal;color:#e2e2e2;letter-spacing:0px;transform:scaleX(1.16)">Width=2048</span>
<span class="t" style="left:114.00px;top:440.67px;font-size:13.5px;font-weight:normal;color:#e2e2e2;letter-spacing:0px;transform:scaleX(1.144)">Height=2048</span>
<span class="t" style="left:114.00px;top:456.67px;font-size:13.5px;font-weight:normal;color:#e2e2e2;letter-spacing:0px;transform:scaleX(1.154)">Depth=16</span>
<!-- annotation ring -->
<svg style="left:14px;top:231px" width="92" height="92" viewBox="14 231 92 92"><ellipse cx="59.4" cy="276.2" rx="39.5" ry="39" fill="none" stroke="#ffff00" stroke-width="3.8"/></svg>
<div class="a" style="left:94px;top:455px;width:3px;height:9px;background:#2a2a2a;border-left:1px solid #151515"></div>
</body>
</html>
